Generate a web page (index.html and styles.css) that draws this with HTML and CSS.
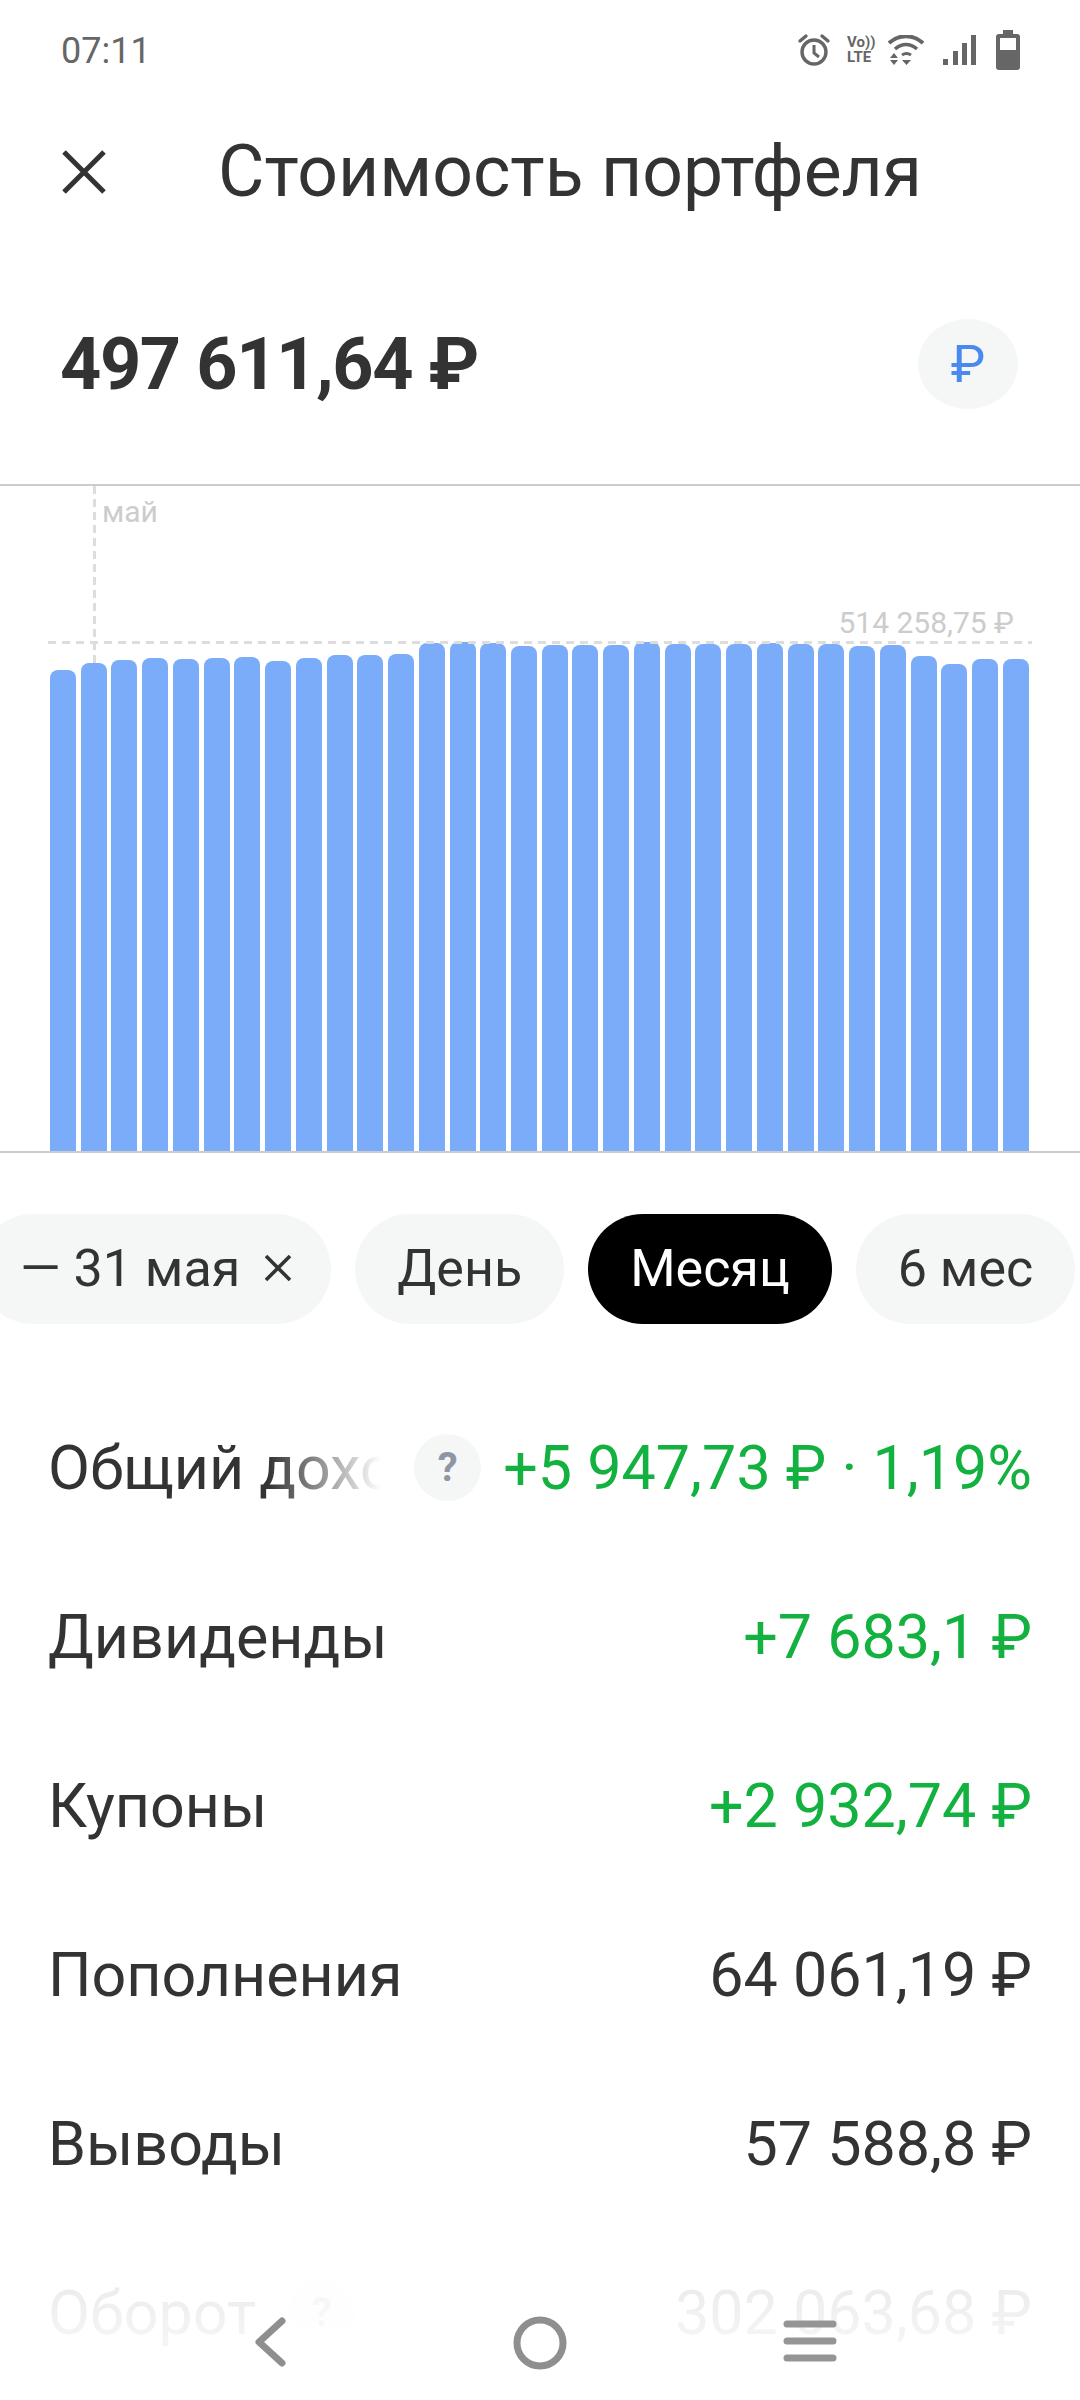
FILE: index.html
```html
<!DOCTYPE html>
<html lang="ru">
<head>
<meta charset="utf-8">
<title>Стоимость портфеля</title>
<link rel="stylesheet" href="styles.css">
</head>
<body>
<div class="screen">
  <div class="status">
    <span class="time">07:11</span>
    <div class="status-icons">
      <svg class="ic-alarm" viewBox="0 0 36 36" width="36" height="36"><circle cx="18" cy="20" r="12" fill="none" stroke="#666" stroke-width="3.4"/><path d="M18 13v8l5 4" fill="none" stroke="#666" stroke-width="3"/><path d="M4 9l6-5M32 9l-6-5" stroke="#666" stroke-width="3.4" stroke-linecap="round"/></svg>
      <div class="volte"><span>Vo))</span><span>LTE</span></div>
      <svg class="ic-wifi" viewBox="0 0 36 30" width="36" height="30"><path d="M1 8C11-1 25-1 35 8" fill="none" stroke="#666" stroke-width="4"/><path d="M7 14c7-6 15-6 22 0" fill="none" stroke="#666" stroke-width="3.6"/><path d="M14 20c3-2 6-2 9 0" fill="none" stroke="#666" stroke-width="3"/><path d="M6 18l4 5H2zM2 25h8l-4 5zM14 25h9l-4.500 5z" fill="#666"/></svg>
      <svg class="ic-signal" viewBox="0 0 34 30" width="34" height="30"><path d="M0 24h5v6H0zM10 16h5v14h-5zM19 8h5v22h-5zM28 0h5v30h-5z" fill="#666"/></svg>
      <svg class="ic-batt" viewBox="0 0 24 40" width="24" height="40"><path d="M7 0h10v4h4a3 3 0 0 1 3 3v30a3 3 0 0 1-3 3H3a3 3 0 0 1-3-3V7a3 3 0 0 1 3-3h4z" fill="#666"/><rect x="4" y="8" width="16" height="12" fill="#fff"/></svg>
    </div>
  </div>

  <header class="head">
    <svg class="ic-close" viewBox="0 0 46 46" width="46" height="46"><path d="M3 3l40 40M43 3L3 43" stroke="#333" stroke-width="5" fill="none"/></svg>
    <h1 class="title">Стоимость портфеля</h1>
  </header>

  <div class="total">
    <span class="sum">497 611,64 ₽</span>
    <span class="cur">₽</span>
  </div>

  <section class="chart">
    <div class="bars">
      <i class="bar" style="height:481px"></i><i class="bar" style="height:488px"></i><i class="bar" style="height:491px"></i><i class="bar" style="height:493px"></i><i class="bar" style="height:492px"></i><i class="bar" style="height:493px"></i><i class="bar" style="height:494px"></i><i class="bar" style="height:490px"></i><i class="bar" style="height:493px"></i><i class="bar" style="height:496px"></i><i class="bar" style="height:496px"></i><i class="bar" style="height:497px"></i><i class="bar" style="height:508px"></i><i class="bar" style="height:509px"></i><i class="bar" style="height:508px"></i><i class="bar" style="height:505px"></i><i class="bar" style="height:506px"></i><i class="bar" style="height:506px"></i><i class="bar" style="height:506px"></i><i class="bar" style="height:509px"></i><i class="bar" style="height:507px"></i><i class="bar" style="height:507px"></i><i class="bar" style="height:507px"></i><i class="bar" style="height:508px"></i><i class="bar" style="height:507px"></i><i class="bar" style="height:507px"></i><i class="bar" style="height:505px"></i><i class="bar" style="height:506px"></i><i class="bar" style="height:495px"></i><i class="bar" style="height:487px"></i><i class="bar" style="height:492px"></i><i class="bar" style="height:492px"></i>
    </div>
    <div class="guide-v"></div>
    <div class="guide-h"></div>
    <span class="lbl-month">май</span>
    <span class="lbl-max">514 258,75 ₽</span>
  </section>

  <div class="pills">
    <div class="pill pill-first"><span>— 31 мая</span><svg viewBox="0 0 28 28" width="28" height="28"><path d="M2 2l24 24M26 2L2 26" stroke="#333" stroke-width="3.6" fill="none"/></svg></div>
    <div class="pill">День</div>
    <div class="pill pill-on">Месяц</div>
    <div class="pill">6 мес</div>
  </div>

  <div class="rows">
    <div class="row"><span class="name name-fade">Общий доход</span><span class="help">?</span><span class="val plus">+5 947,73 ₽ · 1,19%</span></div>
    <div class="row"><span class="name">Дивиденды</span><span class="val plus">+7 683,1 ₽</span></div>
    <div class="row"><span class="name">Купоны</span><span class="val plus">+2 932,74 ₽</span></div>
    <div class="row"><span class="name">Пополнения</span><span class="val">64 061,19 ₽</span></div>
    <div class="row"><span class="name">Выводы</span><span class="val">57 588,8 ₽</span></div>
    <div class="row"><span class="name name-short">Оборот</span><span class="help help-low">?</span><span class="val">302 063,68 ₽</span></div>
  </div>

  <div class="fade"></div>
  <nav class="nav">
    <svg viewBox="0 0 34 50" width="34" height="50"><path d="M29 4L6 25l23 21" fill="none" stroke="#8f8f8f" stroke-width="7" stroke-linecap="round" stroke-linejoin="round"/></svg>
    <svg viewBox="0 0 54 54" width="54" height="54"><circle cx="27" cy="27" r="23" fill="none" stroke="#8f8f8f" stroke-width="7"/></svg>
    <svg viewBox="0 0 54 42" width="54" height="42"><path d="M4 4h46M4 21h46M4 38h46" stroke="#8f8f8f" stroke-opacity=".95" stroke-width="7" stroke-linecap="round"/></svg>
  </nav>
</div>
</body>
</html>
```

FILE: styles.css
```css
* { box-sizing: border-box; }
html, body { margin: 0; padding: 0; background: #fff; }
body { font-family: Roboto, "Noto Sans", sans-serif; color: #333; }

.screen { position: relative; width: 1080px; height: 2400px; overflow: hidden; background: #fff; }

.status { height: 100px; padding: 0 60px 0 61px; display: flex; align-items: center; justify-content: space-between; }
.time { font-size: 36px; color: #666; padding-top: 2px; }
.status-icons { display: flex; align-items: center; }
.ic-alarm { margin-right: 15px; }
.volte { display: flex; flex-direction: column; width: 32px; font-size: 15px; line-height: 15px; font-weight: 700; color: #666; margin-right: 9px; white-space: nowrap; }
.ic-wifi { margin-right: 19px; }
.ic-signal { margin-right: 19px; }

.head { height: 144px; padding-left: 61px; display: flex; align-items: center; }
.ic-close { flex: none; margin-right: 111px; }
.title { margin: 0; font-size: 71.4px; font-weight: 400; line-height: 1; color: #333; white-space: nowrap; }

.total { height: 240px; padding: 0 62px 0 60px; display: flex; align-items: center; justify-content: space-between; }
.sum { font-size: 72px; font-weight: 700; letter-spacing: -1.4px; color: #333; white-space: nowrap; }
.cur { width: 100px; height: 90px; border-radius: 50%; background: #f5f7f7; color: #4a8af0; font-size: 52px; font-weight: 400; display: flex; align-items: center; justify-content: center; }

.chart { position: relative; height: 669px; border-top: 2px solid #ccc; border-bottom: 2px solid #ccc; }
.bars { height: 100%; padding: 0 51px 0 50px; display: flex; align-items: flex-end; justify-content: space-between; }
.bar { display: block; width: 26px; background: #7bacfa; border-radius: 8px 8px 0 0; }
.guide-v { position: absolute; left: 93px; top: 0; height: 178px; width: 3px; background: repeating-linear-gradient(to bottom, #ddd 0 8px, transparent 8px 13px); }
.guide-h { position: absolute; left: 48px; top: 155px; width: 984px; height: 3px; background: repeating-linear-gradient(to right, #ddd 0 8px, transparent 8px 14px); }
.lbl-month { position: absolute; left: 102px; top: 8px; font-size: 30px; line-height: 36px; color: #ccc; }
.lbl-max { position: absolute; right: 66px; top: 119px; font-size: 30px; line-height: 36px; color: #ccc; white-space: nowrap; }

.pills { margin-top: 61px; height: 110px; display: flex; gap: 24px; }
.pill { flex: none; height: 110px; padding: 0 42px 2px; border-radius: 55px; background: #f5f7f7; font-size: 52px; display: flex; align-items: center; white-space: nowrap; color: #333; }
.pill-first { margin-left: -22px; padding-right: 39px; gap: 24px; }
.pill-on { background: #000; color: #fff; }

.rows { margin-top: 59px; }
.row { height: 169px; padding: 0 48px; display: flex; align-items: center; font-size: 61px; white-space: nowrap; }
.name { flex: 1; min-width: 0; color: #333; }
.name-fade { overflow: hidden; -webkit-mask-image: linear-gradient(to right, #000 66%, transparent 100%); mask-image: linear-gradient(to right, #000 66%, transparent 100%); }
.name-short { flex: none; }
.val { margin-left: auto; color: #333; }
.plus { color: #13b13f; }
.help { flex: none; width: 67px; height: 67px; margin: 0 22px 0 33px; border-radius: 50%; background: #f5f7f7; color: #8f96a3; font-size: 40px; font-weight: 700; display: flex; align-items: center; justify-content: center; }
.help-low { margin: 0 0 0 32px; }

.fade { position: absolute; left: 0; right: 0; top: 2180px; height: 220px; background: linear-gradient(to bottom, rgba(255,255,255,0) 0, rgba(255,255,255,.9) 45%, #fff 100%); }
.nav { position: absolute; left: 0; right: 0; top: 2316px; height: 54px; }
.nav svg { position: absolute; top: 1px; }
.nav svg:nth-child(1) { left: 253px; }
.nav svg:nth-child(2) { left: 513px; top: 0; }
.nav svg:nth-child(3) { left: 783px; top: 4px; }
```
